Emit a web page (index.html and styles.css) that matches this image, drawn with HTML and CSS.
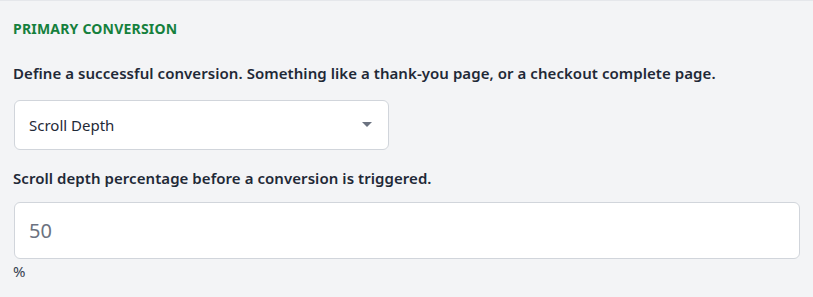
FILE: index.html
```html
<!DOCTYPE html>
<html lang="en">
<head>
    <meta charset="UTF-8">
    <title>Primary conversion</title>
    <link rel="stylesheet" href="styles.css">
</head>
<body>
    <div class="section">
        <h3 class="section-title">Primary Conversion</h3>
        <p class="field-label">Define a successful conversion. Something like a thank-you page, or a checkout complete page.</p>
        <div class="select">
            <span>Scroll Depth</span>
            <svg class="caret" width="10" height="6" viewBox="0 0 10 6"><path d="M0 0h10L5 5z" fill="#6b7280"/></svg>
        </div>
        <p class="field-label">Scroll depth percentage before a conversion is triggered.</p>
        <div class="input">50</div>
        <div class="unit">%</div>
    </div>
</body>
</html>
```

FILE: styles.css
```css
html, body{
    margin: 0;
    padding: 0;
}
body{
    background: #f3f4f6;
    font-family: "Noto Sans", "Open Sans", sans-serif;
    color: #1f2937;
    border-top: 1px solid #e5e7eb;
}
.section{
    padding: 19px 13px 0 13px;
}
.section-title{
    margin: 0;
    font-size: 14px;
    font-weight: 700;
    text-transform: uppercase;
    letter-spacing: 0.2px;
    color: #15803d;
    line-height: 18px;
}
.field-label{
    margin: 0;
    font-size: 15px;
    font-weight: 600;
    line-height: 22px;
    letter-spacing: 0.06px;
}
.section-title + .field-label{
    margin-top: 24px;
}
.select{
    width: 375px;
    height: 50px;
    box-sizing: border-box;
    margin: 16px 0 17px 1px;
    padding: 0 16px 0 14px;
    background: #fff;
    border: 1px solid #d1d5db;
    border-radius: 6px;
    display: flex;
    align-items: center;
    justify-content: space-between;
    font-size: 15px;
}
.input{
    margin: 13px 0 0 1px;
    height: 57px;
    box-sizing: border-box;
    padding: 0 14px;
    background: #fff;
    border: 1px solid #d1d5db;
    border-radius: 6px;
    display: flex;
    align-items: center;
    font-size: 20px;
    color: #6b7280;
}
.unit{
    margin-top: 2px;
    font-size: 15px;
    color: #374151;
}
```
